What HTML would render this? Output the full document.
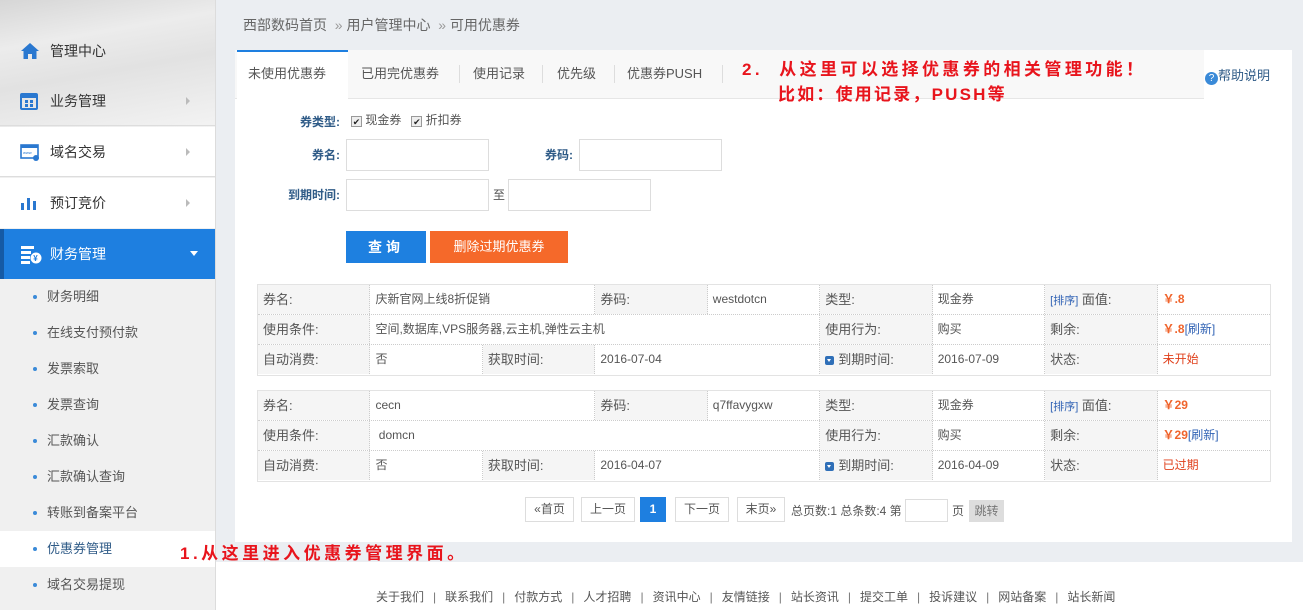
<!DOCTYPE html>
<html><head><meta charset="utf-8"><style>
*{margin:0;padding:0;box-sizing:border-box}
body{width:1303px;height:610px;overflow:hidden;background:#fff;font-family:"Liberation Sans","Microsoft YaHei","Noto Sans CJK SC",sans-serif;font-size:13px;color:#555;position:relative}
.abs{position:absolute}
#side{left:0;top:0;width:216px;height:610px;background:#f0f0f0;border-right:1px solid #dcdcdc}
#cloud{left:0;top:0;width:215px;height:127px;background:linear-gradient(170deg,#d6d6d6 0%,#ececec 30%,#e2e2e2 55%,#f3f3f3 100%)}
.mi{position:absolute;left:0;width:215px;height:50px;font-size:14px;color:#333;line-height:50px;padding-left:50px}
.mi .ar{position:absolute;left:186px;top:21px;width:0;height:0;border-left:4px solid #bbb;border-top:4px solid transparent;border-bottom:4px solid transparent}
.mi svg{position:absolute;left:20px;top:16px}
.sub{position:absolute;left:0;width:215px;height:36px;line-height:36px;padding-left:47px;font-size:13px;color:#555}
.sub:before{content:"";position:absolute;left:33px;top:16px;width:4px;height:4px;border-radius:50%;background:#3a8ad8}
#main{left:216px;top:0;width:1087px;height:562px;background:#ebeef2}
#panel{left:235px;top:50px;width:1057px;height:492px;background:#fff}
.tabbar{left:235px;top:50px;width:969px;height:49px;background:#f8f8f8;border-bottom:1px solid #e6e6e6}
.tab{position:absolute;top:50px;height:49px;line-height:47px;font-size:13px;color:#555}
.sep{position:absolute;top:65px;width:1px;height:18px;background:#ddd}
.lbl{position:absolute;font-weight:bold;color:#2f5b87;font-size:12px;text-align:right}
.inp{position:absolute;border:1px solid #ddd;background:#fff;height:32px}
.tbl{position:absolute;left:257px;width:1014px;border:1px solid #e3e3e3}
.tr{display:flex;height:30px;border-bottom:1px dotted #ccc}
.tr:last-child{border-bottom:none}
.c{height:29px;line-height:29px;padding-left:5px;border-right:1px dotted #ccc;font-size:12px;color:#555;white-space:nowrap;overflow:hidden}
.c:last-child{border-right:none}
.g{background:#f5f5f5;font-size:13px;color:#555}
.w1{width:112.67px}.w2{width:225.3px}.w4{width:450.7px}
.or{color:#f0642c;font-weight:bold}
.bl{color:#3163b5}
.rd{color:#e0401c}
.pg{position:absolute;top:497px;height:25px;line-height:23px;border:1px solid #ddd;background:#fff;font-size:12px;color:#555;text-align:center}
.red{position:absolute;color:#e8141c;font-weight:bold;font-family:"Liberation Sans","Noto Sans CJK SC",sans-serif;white-space:nowrap}
.foot{position:absolute;top:588px;left:376px;font-size:12px;color:#555;white-space:nowrap}
.foot span{color:#777;margin:0 9px}
.dwn{display:inline-block;width:9px;height:9px;background:#2f6fb8;border-radius:2px;vertical-align:-1px;margin-right:4px;position:relative}
.dwn:after{content:"";position:absolute;left:2px;top:3px;border-left:2.5px solid transparent;border-right:2.5px solid transparent;border-top:3px solid #fff}
</style></head><body>
<div id="side" class="abs"></div>
<div id="cloud" class="abs"></div>
<div class="mi" style="top:26px">
<svg width="20" height="18" viewBox="0 0 20 18"><path d="M10 1 L1 9 L3.5 9 L3.5 17 L8 17 L8 12 L12 12 L12 17 L16.5 17 L16.5 9 L19 9 Z" fill="#2a78d0"/></svg>管理中心</div>
<div class="mi" style="top:76px;border-bottom:1px solid #ddd">
<svg width="18" height="18" viewBox="0 0 18 18"><rect x="1" y="2" width="16" height="15" rx="1" fill="none" stroke="#2a78d0" stroke-width="2"/><rect x="1" y="2" width="16" height="4" fill="#2a78d0"/><rect x="5" y="8" width="3" height="3" fill="#2a78d0"/><rect x="10" y="8" width="3" height="3" fill="#2a78d0"/><rect x="5" y="12" width="3" height="3" fill="#2a78d0"/><rect x="10" y="12" width="3" height="3" fill="#2a78d0"/></svg>业务管理<i class="ar"></i></div>
<div class="mi" style="top:127px;background:#fff;border-bottom:1px solid #ddd">
<svg width="20" height="18" viewBox="0 0 20 18"><rect x="1" y="2" width="17" height="13" fill="none" stroke="#2a78d0" stroke-width="1.6"/><rect x="1" y="2" width="17" height="3" fill="#2a78d0"/><text x="3" y="11" font-size="4" fill="#2a78d0">www</text><circle cx="16" cy="15" r="3" fill="#2a78d0"/></svg>域名交易<i class="ar"></i></div>
<div class="mi" style="top:178px;background:#fff">
<svg width="18" height="18" viewBox="0 0 18 18"><rect x="1" y="9" width="3" height="7" fill="#2a78d0"/><rect x="7" y="4" width="3" height="12" fill="#2a78d0"/><rect x="13" y="7" width="3" height="9" fill="#2a78d0"/></svg>预订竞价<i class="ar"></i></div>
<div class="mi" style="top:229px;background:#1e7fe0;color:#fff;border-left:4px solid #155aa5;padding-left:46px">
<svg width="22" height="20" viewBox="0 0 22 20" style="left:16px"><rect x="1" y="1" width="13" height="3" fill="#fff"/><rect x="1" y="6" width="10" height="3" fill="#fff"/><rect x="1" y="11" width="9" height="3" fill="#fff"/><rect x="1" y="16" width="9" height="3" fill="#fff"/><circle cx="16" cy="13" r="5.5" fill="#fff"/><text x="13.2" y="16" font-size="8" fill="#1e7fe0" font-weight="bold">¥</text></svg>财务管理<i style="position:absolute;left:186px;top:22px;border-top:5px solid #fff;border-left:4px solid transparent;border-right:4px solid transparent"></i></div>
<div class="sub" style="top:279px">财务明细</div>
<div class="sub" style="top:315px">在线支付预付款</div>
<div class="sub" style="top:351px">发票索取</div>
<div class="sub" style="top:387px">发票查询</div>
<div class="sub" style="top:423px">汇款确认</div>
<div class="sub" style="top:459px">汇款确认查询</div>
<div class="sub" style="top:495px">转账到备案平台</div>
<div class="sub" style="top:531px;background:#fff;color:#2f5b87">优惠券管理</div>
<div class="sub" style="top:567px">域名交易提现</div>

<div id="main" class="abs"></div>
<div class="abs" style="left:243px;top:15px;font-size:14px;color:#666">西部数码首页 &nbsp;<span style="color:#999">»</span> 用户管理中心 &nbsp;<span style="color:#999">»</span> 可用优惠券</div>
<div id="panel" class="abs"></div>
<div class="tabbar abs"></div>
<div class="abs" style="left:237px;top:50px;width:111px;height:50px;background:#fff;border-top:2px solid #1e7fe0"></div>
<div class="tab" style="left:248px">未使用优惠券</div>
<div class="tab" style="left:361px">已用完优惠券</div>
<div class="sep" style="left:459px"></div>
<div class="tab" style="left:473px">使用记录</div>
<div class="sep" style="left:542px"></div>
<div class="tab" style="left:557px">优先级</div>
<div class="sep" style="left:614px"></div>
<div class="tab" style="left:627px">优惠券PUSH</div>
<div class="sep" style="left:722px"></div>
<div class="abs" style="left:1205px;top:65px;font-size:13px;color:#2f5b87"><span style="display:inline-block;width:13px;height:13px;border-radius:50%;background:#3a8ad8;color:#fff;font-size:10px;line-height:13px;text-align:center;vertical-align:-1px">?</span>帮助说明</div>
<div class="red" style="left:742px;top:55px;font-size:17px;letter-spacing:3.4px">2.&nbsp; 从这里可以选择优惠券的相关管理功能！</div>
<div class="red" style="left:778px;top:80px;font-size:17px;letter-spacing:2.2px">比如：使用记录，PUSH等</div>

<div class="lbl" style="left:280px;top:113px;width:60px">券类型:</div>
<div class="abs" style="left:351px;top:111px;font-size:12px;color:#555"><span style="display:inline-block;width:11px;height:11px;border:1px solid #999;background:#eee;font-size:9px;line-height:10px;text-align:center;vertical-align:-1px;color:#222">✔</span> 现金券 &nbsp;&nbsp;<span style="display:inline-block;width:11px;height:11px;border:1px solid #999;background:#eee;font-size:9px;line-height:10px;text-align:center;vertical-align:-1px;color:#222">✔</span> 折扣券</div>
<div class="lbl" style="left:280px;top:146px;width:60px">券名:</div>
<div class="inp" style="left:346px;top:139px;width:143px"></div>
<div class="lbl" style="left:510px;top:146px;width:63px">券码:</div>
<div class="inp" style="left:579px;top:139px;width:143px"></div>
<div class="lbl" style="left:270px;top:186px;width:70px">到期时间:</div>
<div class="inp" style="left:346px;top:179px;width:143px"></div>
<div class="abs" style="left:493px;top:186px;font-size:12px">至</div>
<div class="inp" style="left:508px;top:179px;width:143px"></div>
<div class="abs" style="left:346px;top:231px;width:80px;height:32px;background:#1e80e0;color:#fff;font-size:14px;font-weight:bold;line-height:32px;text-align:center;letter-spacing:4px">查询</div>
<div class="abs" style="left:430px;top:231px;width:138px;height:32px;background:#f5692a;color:#fff;font-size:13px;line-height:32px;text-align:center">删除过期优惠券</div>

<div class="tbl" style="top:284px">
<div class="tr"><div class="c g w1">券名:</div><div class="c w2">庆新官网上线8折促销</div><div class="c g w1">券码:</div><div class="c w1">westdotcn</div><div class="c g w1">类型:</div><div class="c w1">现金券</div><div class="c g w1"><span class="bl" style="font-size:11px">[排序]</span> 面值:</div><div class="c w1 or">￥.8</div></div>
<div class="tr"><div class="c g w1">使用条件:</div><div class="c w4">空间,数据库,VPS服务器,云主机,弹性云主机</div><div class="c g w1">使用行为:</div><div class="c w1">购买</div><div class="c g w1">剩余:</div><div class="c w1"><span class="or">￥.8</span><span class="bl">[刷新]</span></div></div>
<div class="tr"><div class="c g w1">自动消费:</div><div class="c w1">否</div><div class="c g w1">获取时间:</div><div class="c w2">2016-07-04</div><div class="c g w1"><i class="dwn"></i>到期时间:</div><div class="c w1">2016-07-09</div><div class="c g w1">状态:</div><div class="c w1 rd">未开始</div></div>
</div>
<div class="tbl" style="top:390px">
<div class="tr"><div class="c g w1">券名:</div><div class="c w2">cecn</div><div class="c g w1">券码:</div><div class="c w1">q7ffavygxw</div><div class="c g w1">类型:</div><div class="c w1">现金券</div><div class="c g w1"><span class="bl" style="font-size:11px">[排序]</span> 面值:</div><div class="c w1 or">￥29</div></div>
<div class="tr"><div class="c g w1">使用条件:</div><div class="c w4">&nbsp;domcn</div><div class="c g w1">使用行为:</div><div class="c w1">购买</div><div class="c g w1">剩余:</div><div class="c w1"><span class="or">￥29</span><span class="bl">[刷新]</span></div></div>
<div class="tr"><div class="c g w1">自动消费:</div><div class="c w1">否</div><div class="c g w1">获取时间:</div><div class="c w2">2016-04-07</div><div class="c g w1"><i class="dwn"></i>到期时间:</div><div class="c w1">2016-04-09</div><div class="c g w1">状态:</div><div class="c w1 rd">已过期</div></div>
</div>

<div class="pg" style="left:525px;width:49px">«首页</div>
<div class="pg" style="left:581px;width:54px">上一页</div>
<div class="pg" style="left:640px;width:26px;background:#1e7fe0;border-color:#1e7fe0;color:#fff;font-weight:bold">1</div>
<div class="pg" style="left:675px;width:54px">下一页</div>
<div class="pg" style="left:737px;width:48px">末页»</div>
<div class="abs" style="left:791px;top:502px;font-size:12px;color:#555">总页数:1 总条数:4 第</div>
<div class="inp" style="left:905px;top:499px;width:43px;height:23px"></div>
<div class="abs" style="left:952px;top:502px;font-size:12px">页</div>
<div class="abs" style="left:969px;top:500px;width:35px;height:22px;background:#ddd;font-size:12px;line-height:22px;text-align:center;color:#777">跳转</div>

<div class="red" style="left:180px;top:539px;font-size:17px;letter-spacing:3.5px">1.从这里进入优惠券管理界面。</div>

<div class="foot">关于我们<span>|</span>联系我们<span>|</span>付款方式<span>|</span>人才招聘<span>|</span>资讯中心<span>|</span>友情链接<span>|</span>站长资讯<span>|</span>提交工单<span>|</span>投诉建议<span>|</span>网站备案<span>|</span>站长新闻</div>
</body></html>
